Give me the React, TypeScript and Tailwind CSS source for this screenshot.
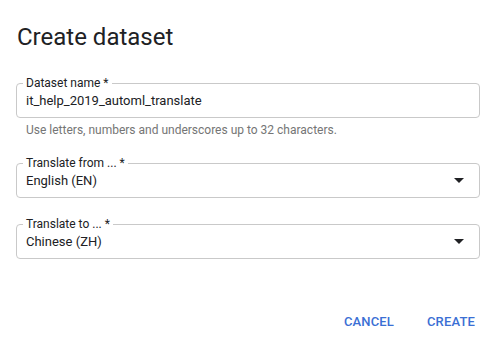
import React from 'react';

const Field: React.FC<{ label: string; value: string; select?: boolean }> = ({ label, value, select }) => (
  <div className="relative h-[35px] rounded-[4px] border border-[#c9c9c9] flex items-center pl-[9px] pr-[15px]">
    <span className="absolute -top-[7px] left-[6px] px-[3px] bg-white text-[12px] leading-none text-[#202124]">{label}</span>
    <span className="flex-1 text-[13px] leading-5 text-[#202124] pt-[1px]">{value}</span>
    {select && (
      <svg width="10" height="5" viewBox="0 0 10 5">
        <path d="M0 0h10L5 5z" fill="#202124" />
      </svg>
    )}
  </div>
);

export default function App() {
  return (
    <div className="w-[496px] h-[351px] bg-white px-4 pt-[23px] font-['Roboto',sans-serif]">
      <h1 className="text-[24px] leading-[28px] text-[#202124] pl-[1px]">Create dataset</h1>

      <div className="mt-[32px]">
        <Field label="Dataset name *" value="it_help_2019_automl_translate" />
        <p className="mt-[4px] pl-[10px] text-[12px] leading-4 text-[#757575]">
          Use letters, numbers and underscores up to 32 characters.
        </p>
      </div>

      <div className="mt-[25px]">
        <Field label="Translate from ... *" value="English (EN)" select />
      </div>

      <div className="mt-[26px]">
        <Field label="Translate to ... *" value="Chinese (ZH)" select />
      </div>

      <div className="mt-[55px] flex justify-end gap-[33px] pr-[5px]">
        <button className="text-[13px] font-medium leading-4 tracking-[0.15px] text-[#3b6fd4]">CANCEL</button>
        <button className="text-[13px] font-medium leading-4 tracking-[0.15px] text-[#3b6fd4]">CREATE</button>
      </div>
    </div>
  );
}
